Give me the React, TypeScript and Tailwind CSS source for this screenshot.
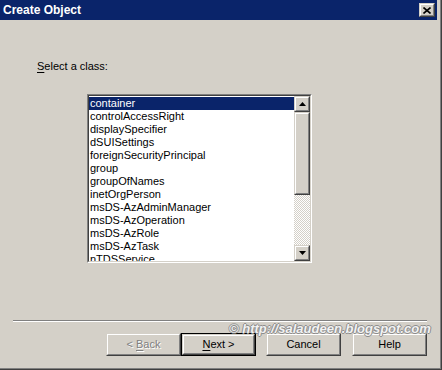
import React from 'react';

const classes = [
    'container',
    'controlAccessRight',
    'displaySpecifier',
    'dSUISettings',
    'foreignSecurityPrincipal',
    'group',
    'groupOfNames',
    'inetOrgPerson',
    'msDS-AzAdminManager',
    'msDS-AzOperation',
    'msDS-AzRole',
    'msDS-AzTask',
    'nTDSService',
];

// raised 3d edge used by buttons and scrollbar parts
const Raised = ({ className = '', children }: { className?: string; children?: React.ReactNode }) => (
    <div className={`border-t border-l border-[#d4d0c8] border-r border-b border-r-[#404040] border-b-[#404040] bg-[#d4d0c8] ${className}`}>
        <div className="w-full h-full border-t border-l border-white border-r border-b border-r-[#808080] border-b-[#808080] flex items-center justify-center">
            {children}
        </div>
    </div>
);

const Arrow = ({ down }: { down?: boolean }) => (
    <svg width="7" height="4" viewBox="0 0 7 4">
        <path d={down ? 'M0 0H7L3.5 4Z' : 'M0 4H7L3.5 0Z'} fill="#000" />
    </svg>
);

const Button = ({ label, u, rest, disabled, isDefault }: { label?: string; u: string; rest: string; disabled?: boolean; isDefault?: boolean }) => {
    const text = (
        <span className={disabled ? 'text-[#808080] [text-shadow:1px_1px_0_#fff]' : 'text-black'}>
            {label}
            <span className="underline underline-offset-2">{u}</span>
            {rest}
        </span>
    );
    if (isDefault) {
        return (
            <div className="w-[75px] h-[23px] border border-black">
                <Raised className="w-full h-full">{text}</Raised>
            </div>
        );
    }
    return <Raised className="w-[75px] h-[23px]">{text}</Raised>;
};

export default function App() {
    return (
        <div className="relative w-[442px] h-[370px] bg-[#d4d0c8] border-r border-b border-[#404040] font-['Liberation_Sans',Arial,sans-serif] text-[11px] leading-[13px] text-black select-none">
            <div className="h-full border-r border-b border-[#808080]">
                <div className="h-full pr-[3px] pb-[2px] flex flex-col">
                    {/* title bar */}
                    <div className="h-[20px] bg-[#0a246a] flex items-center justify-between pl-[3px] pr-[2px] shrink-0">
                        <span className="text-white font-bold text-[12px] leading-[14px]">Create Object</span>
                        <Raised className="w-[16px] h-[14px]">
                            <svg width="8" height="7" viewBox="0 0 8 7">
                                <path d="M0.5 0.5L7.5 6.5M7.5 0.5L0.5 6.5" stroke="#000" strokeWidth="1.6" />
                            </svg>
                        </Raised>
                    </div>

                    <div className="mt-[40px] ml-[37px]">
                        <span className="underline underline-offset-2">S</span>elect a class:
                    </div>

                    {/* list box */}
                    <div className="mt-[21px] ml-[87px] w-[225px] h-[169px] border-t border-l border-[#808080] border-r border-b border-r-white border-b-white">
                        <div className="w-full h-full border-t border-l border-[#404040] border-r border-b border-r-[#d4d0c8] border-b-[#d4d0c8] bg-white flex">
                            <div className="flex-1 overflow-hidden pt-[1px]">
                                {classes.map((c, i) => (
                                    <div key={c} className={`h-[13px] pl-[1px] whitespace-nowrap ${i === 0 ? 'bg-[#0a246a] text-white' : ''}`}>
                                        {c}
                                    </div>
                                ))}
                            </div>
                            <div className="w-[16px] flex flex-col">
                                <Raised className="w-[16px] h-[16px]"><Arrow /></Raised>
                                <Raised className="w-[16px] h-[83px]" />
                                <div className="flex-1 bg-[conic-gradient(#d4d0c8_25%,#fff_0_50%,#d4d0c8_0_75%,#fff_0)] bg-[length:2px_2px]" />
                                <Raised className="w-[16px] h-[16px]"><Arrow down /></Raised>
                            </div>
                        </div>
                    </div>

                    {/* separator */}
                    <div className="mt-[57px] ml-[13px] w-[414px] border-t border-[#808080] border-b border-b-white" />

                    <div className="mt-[11px] ml-[106px] flex">
                        <Button label="< " u="B" rest="ack" disabled />
                        <Button u="N" rest="ext >" isDefault />
                        <div className="ml-[10px]"><Button label="Cancel" u="" rest="" /></div>
                        <div className="ml-[11px]"><Button label="Help" u="" rest="" /></div>
                    </div>
                </div>
            </div>

            <div className="absolute left-[229px] top-[321px] whitespace-nowrap italic font-bold text-[13px] leading-[15px] text-[#f2f2f2] [text-shadow:1px_0_0_#8c8c8c,-1px_0_0_#8c8c8c,0_1px_0_#8c8c8c,0_-1px_0_#8c8c8c]">
                © http://salaudeen.blogspot.com
            </div>
        </div>
    );
}
